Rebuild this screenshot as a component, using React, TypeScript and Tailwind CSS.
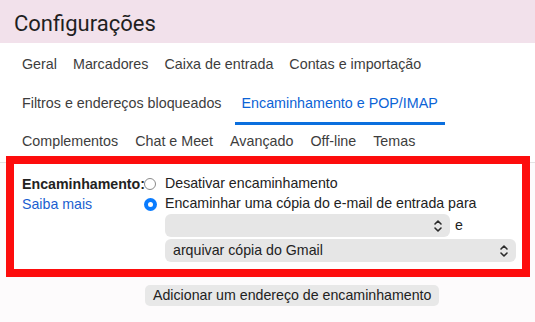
import React from 'react';

const font = { fontFamily: '"Liberation Sans", Arial, sans-serif' };

const row1 = ['Geral', 'Marcadores', 'Caixa de entrada', 'Contas e importação'];
const row2 = ['Filtros e endereços bloqueados', 'Encaminhamento e POP/IMAP'];
const row3 = ['Complementos', 'Chat e Meet', 'Avançado', 'Off-line', 'Temas'];
const ACTIVE = 'Encaminhamento e POP/IMAP';

const Chevrons = () => (
  <svg width="10" height="14" viewBox="0 0 10 14" fill="none" stroke="#2b2b2b" strokeWidth="1.6" strokeLinecap="round" strokeLinejoin="round">
    <path d="M2 5 L5 2 L8 5" />
    <path d="M2 9 L5 12 L8 9" />
  </svg>
);

const Tab = ({ label }: { label: string }) => (
  <div
    className={`flex items-center px-[7px] text-[14.3px] border-b-[3px] ${
      label === ACTIVE ? 'text-[#0b63d6] border-[#0b6fde]' : 'text-[#3d3d3d] border-transparent'
    }`}
  >
    {label}
  </div>
);

export default function App() {
  return (
    <div className="w-[535px] h-[322px] overflow-hidden bg-[#fdfbfc]" style={font}>
      <div className="h-[43px] bg-[#f2e1eb] flex items-center px-[14px] pt-[3px]">
        <span className="text-[22px] text-[#1f1f1f]" style={{ fontFamily: 'Roboto, "Liberation Sans", sans-serif' }}>
          Configurações
        </span>
      </div>
      <div className="bg-white pt-[4px] border-b border-[#e3e3e3]">
        <div className="flex h-[39px] items-stretch pl-[15px] gap-[2px]">
          {row1.map((t) => <Tab key={t} label={t} />)}
        </div>
        <div className="flex h-[39px] items-stretch pl-[15px] gap-[6px]">
          {row2.map((t) => <Tab key={t} label={t} />)}
        </div>
        <div className="flex h-[37px] items-stretch pl-[15px] gap-[3px]">
          {row3.map((t) => <Tab key={t} label={t} />)}
        </div>
      </div>
      <div className="relative -mt-[7px] ml-[6px] w-[524px] h-[121px] border-[8px] border-[#fd0d0d] bg-white">
        <div className="flex pl-[8px] pt-[10px] text-[14.2px] text-[#222]">
          <div className="w-[122px] flex flex-col">
            <div className="h-[20px] leading-[20px] font-bold">Encaminhamento:</div>
            <div className="h-[20px] leading-[20px] text-[#1a5fd0]">Saiba mais</div>
          </div>
          <div className="flex flex-col">
            <div className="h-[20px] flex items-center">
              <span className="w-[12px] h-[12px] rounded-full border border-[#8a8a8a] bg-white mr-[9px]" />
              <span>Desativar encaminhamento</span>
            </div>
            <div className="h-[20px] flex items-center">
              <span className="w-[13px] h-[13px] rounded-full bg-[#0a7cff] mr-[8px] flex items-center justify-center">
                <span className="w-[5px] h-[5px] rounded-full bg-white" />
              </span>
              <span>Encaminhar uma cópia do e-mail de entrada para</span>
            </div>
            <div className="pl-[21px] flex flex-col">
              <div className="flex items-center h-[23px]">
                <div className="w-[285px] h-[23px] rounded-[6px] bg-[#e6e6e6] flex items-center justify-end pr-[7px]">
                  <Chevrons />
                </div>
                <span className="ml-[5px]">e</span>
              </div>
              <div className="w-[351px] h-[23px] mt-[2px] rounded-[6px] bg-[#e6e6e6] flex items-center justify-between pl-[8px] pr-[7px]">
                <span>arquivar cópia do Gmail</span>
                <Chevrons />
              </div>
            </div>
          </div>
        </div>
      </div>
      <div className="pl-[145px] pt-[6px]">
        <div className="inline-flex h-[21px] w-[294px] items-center rounded-[5px] bg-[#e8e8e8] pl-[8px] text-[14.2px] text-[#222]">
          Adicionar um endereço de encaminhamento
        </div>
      </div>
    </div>
  );
}
